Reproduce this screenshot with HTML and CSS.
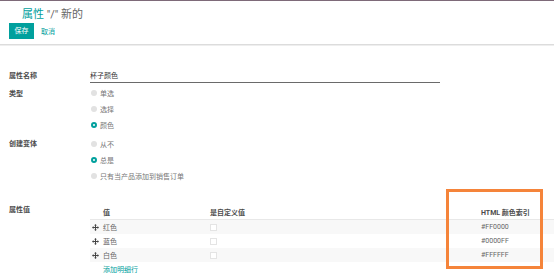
FILE: index.html
```html
<!DOCTYPE html>
<html lang="zh">
<head>
<meta charset="utf-8">
<link rel="stylesheet" href="styles.css">
</head>
<body>
<div class="topbar"></div>
<div class="control">
  <div class="title"><span class="crumb">属性</span> "/" 新的</div>
  <div class="buttons">
    <span class="btn-save">保存</span>
    <span class="btn-cancel">取消</span>
  </div>
</div>
<div class="sheet">
  <div class="row row-name">
    <div class="label">属性名称</div>
    <div class="field"><div class="input">杯子颜色</div></div>
  </div>
  <div class="row row-type">
    <div class="label">类型</div>
    <div class="field radios">
      <div class="radio"><span class="dot"></span>单选</div>
      <div class="radio"><span class="dot"></span>选择</div>
      <div class="radio"><span class="dot on"></span>颜色</div>
    </div>
  </div>
  <div class="row row-variant">
    <div class="label">创建变体</div>
    <div class="field radios">
      <div class="radio"><span class="dot"></span>从不</div>
      <div class="radio"><span class="dot on"></span>总是</div>
      <div class="radio"><span class="dot"></span>只有当产品添加到销售订单</div>
    </div>
  </div>
  <div class="row row-values">
    <div class="label">属性值</div>
    <div class="field table">
      <div class="tr head">
        <div class="td"></div>
        <div class="td">值</div>
        <div class="td">是自定义值</div>
        <div class="td">HTML 颜色索引</div>
      </div>
      <div class="tr odd">
        <div class="td"><svg class="drag" viewBox="0 0 14 14"><path d="M7 0 L9.8 3 H8 V6 H11 V4.2 L14 7 L11 9.8 V8 H8 V11 H9.8 L7 14 L4.2 11 H6 V8 H3 V9.8 L0 7 L3 4.2 V6 H6 V3 H4.2 Z"/></svg></div>
        <div class="td">红色</div>
        <div class="td"><span class="check"></span></div>
        <div class="td hex">#FF0000</div>
      </div>
      <div class="tr">
        <div class="td"><svg class="drag" viewBox="0 0 14 14"><path d="M7 0 L9.8 3 H8 V6 H11 V4.2 L14 7 L11 9.8 V8 H8 V11 H9.8 L7 14 L4.2 11 H6 V8 H3 V9.8 L0 7 L3 4.2 V6 H6 V3 H4.2 Z"/></svg></div>
        <div class="td">蓝色</div>
        <div class="td"><span class="check"></span></div>
        <div class="td hex">#0000FF</div>
      </div>
      <div class="tr odd">
        <div class="td"><svg class="drag" viewBox="0 0 14 14"><path d="M7 0 L9.8 3 H8 V6 H11 V4.2 L14 7 L11 9.8 V8 H8 V11 H9.8 L7 14 L4.2 11 H6 V8 H3 V9.8 L0 7 L3 4.2 V6 H6 V3 H4.2 Z"/></svg></div>
        <div class="td">白色</div>
        <div class="td"><span class="check"></span></div>
        <div class="td hex">#FFFFFF</div>
      </div>
      <div class="tr add">
        <div class="td"></div>
        <div class="td link">添加明细行</div>
      </div>
    </div>
  </div>
</div>
<div class="highlight"></div>
</body>
</html>
```
FILE: styles.css
```css
html, body {
  margin: 0;
  padding: 0;
  background: #fff;
  width: 554px;
  height: 280px;
  overflow: hidden;
  position: relative;
  font-family: Roboto, "Noto Sans CJK SC", sans-serif;
  font-size: 7px;
  color: #666;
}
.topbar {
  height: 1px;
  background: #7e6a79;
}
.control {
  height: 43px;
  border-bottom: 1px solid #dcdcdc;
  box-shadow: 0 1px 0 #eeeeee;
  padding-left: 9px;
  display: flex;
  flex-direction: column;
}
.title {
  margin-left: 13px;
  margin-top: 6px;
  height: 15px;
  line-height: 15px;
  font-size: 11px;
  color: #666;
}
.crumb { color: #00a09d; }
.buttons {
  margin-top: 1px;
  display: flex;
  align-items: center;
  gap: 7px;
}
.btn-save {
  width: 25px;
  height: 16px;
  line-height: 16px;
  text-align: center;
  background: #00a09d;
  color: #fff;
  font-size: 7px;
}
.btn-cancel { color: #00a09d; }
.sheet {
  padding-top: 25px;
  display: flex;
  flex-direction: column;
}
.row {
  display: flex;
}
.label {
  width: 81px;
  padding-left: 9px;
  font-weight: bold;
  color: #4c4c4c;
  height: 12px;
  line-height: 12px;
  flex: none;
}
.field { flex: 1; }
.input {
  width: 350px;
  height: 12px;
  line-height: 12px;
  border-bottom: 1px solid #6a6a6a;
  color: #333;
}
.row-name .label { height: 12px; line-height: 12px; }
.row-type { margin-top: 2px; }
.row-type .label { margin-top: 3px; }
.row-variant { margin-top: 3px; }
.row-variant .label { margin-top: 2px; }
.radios { display: flex; flex-direction: column; }
.radio {
  height: 16px;
  display: flex;
  align-items: center;
  padding-left: 1px;
  color: #777;
}
.dot {
  width: 6px;
  height: 6px;
  border-radius: 50%;
  background: #e2e2e2;
  margin-right: 3px;
  box-sizing: border-box;
}
.dot.on {
  background: #fff;
  border: 2px solid #00a09d;
}
.row-values { margin-top: 20px; }
.row-values .label { margin-top: 0; }
.table { display: flex; flex-direction: column; }
.tr {
  display: grid;
  grid-template-columns: 13px 107px 271px 1fr;
  height: 14px;
  align-items: center;
}
.tr.head {
  height: 14px;
  padding-top: 1px;
  border-bottom: 1px solid #e8e8e8;
  box-shadow: 0 1px 0 #f2f2f2;
  font-weight: bold;
  color: #4c4c4c;
}
.tr.odd { background: #f8f8f8; }
.tr.add { height: 13px; }
.td { white-space: nowrap; }
.hex { color: #666; }
.drag {
  width: 7px;
  height: 7px;
  fill: #444;
  display: block;
  margin-left: 2px;
}
.check {
  display: block;
  width: 7px;
  height: 7px;
  border: 1px solid #e4e4e4;
  background: #fff;
  box-sizing: border-box;
}
.link { color: #00a09d; }
.highlight {
  position: absolute;
  left: 446px;
  top: 189px;
  width: 97px;
  height: 80px;
  border: 3px solid #f5843a;
  box-sizing: border-box;
}
```
